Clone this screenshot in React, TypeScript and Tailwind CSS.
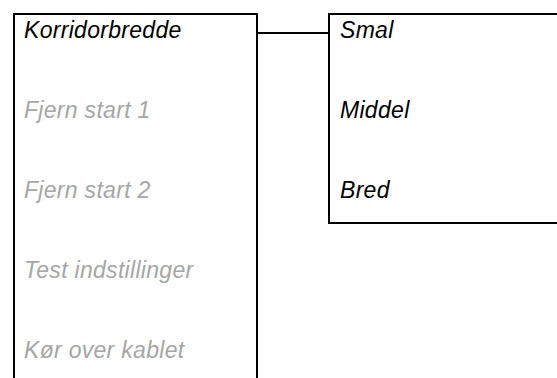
const menu = [
  { label: "Korridorbredde", active: true },
  { label: "Fjern start 1", active: false },
  { label: "Fjern start 2", active: false },
  { label: "Test indstillinger", active: false },
  { label: "Kør over kablet", active: false },
];

const submenu = ["Smal", "Middel", "Bred"];

export default function App() {
  return (
    <div
      className="flex h-[378px] w-[557px] items-start overflow-hidden bg-white pl-[13px] pt-[13px] italic text-[23px] tracking-[0.3px]"
      style={{ fontFamily: '"Liberation Sans", Arial, sans-serif' }}
    >
      {/* main menu */}
      <div className="flex h-[400px] w-[245px] shrink-0 flex-col gap-[56px] border-2 border-black pl-[9px] pt-[3px]">
        {menu.map((item) => (
          <div
            key={item.label}
            className={`leading-[24px] ${item.active ? "text-black" : "text-[#a6a6a6]"}`}
          >
            {item.label}
          </div>
        ))}
      </div>

      {/* connector */}
      <div className="mt-[19px] h-[2px] w-[70px] shrink-0 bg-black" />

      {/* submenu */}
      <div className="flex h-[211px] w-[260px] shrink-0 flex-col gap-[56px] border-2 border-black pl-[10px] pt-[3px] text-black">
        {submenu.map((s) => (
          <div key={s} className="leading-[24px]">
            {s}
          </div>
        ))}
      </div>
    </div>
  );
}
